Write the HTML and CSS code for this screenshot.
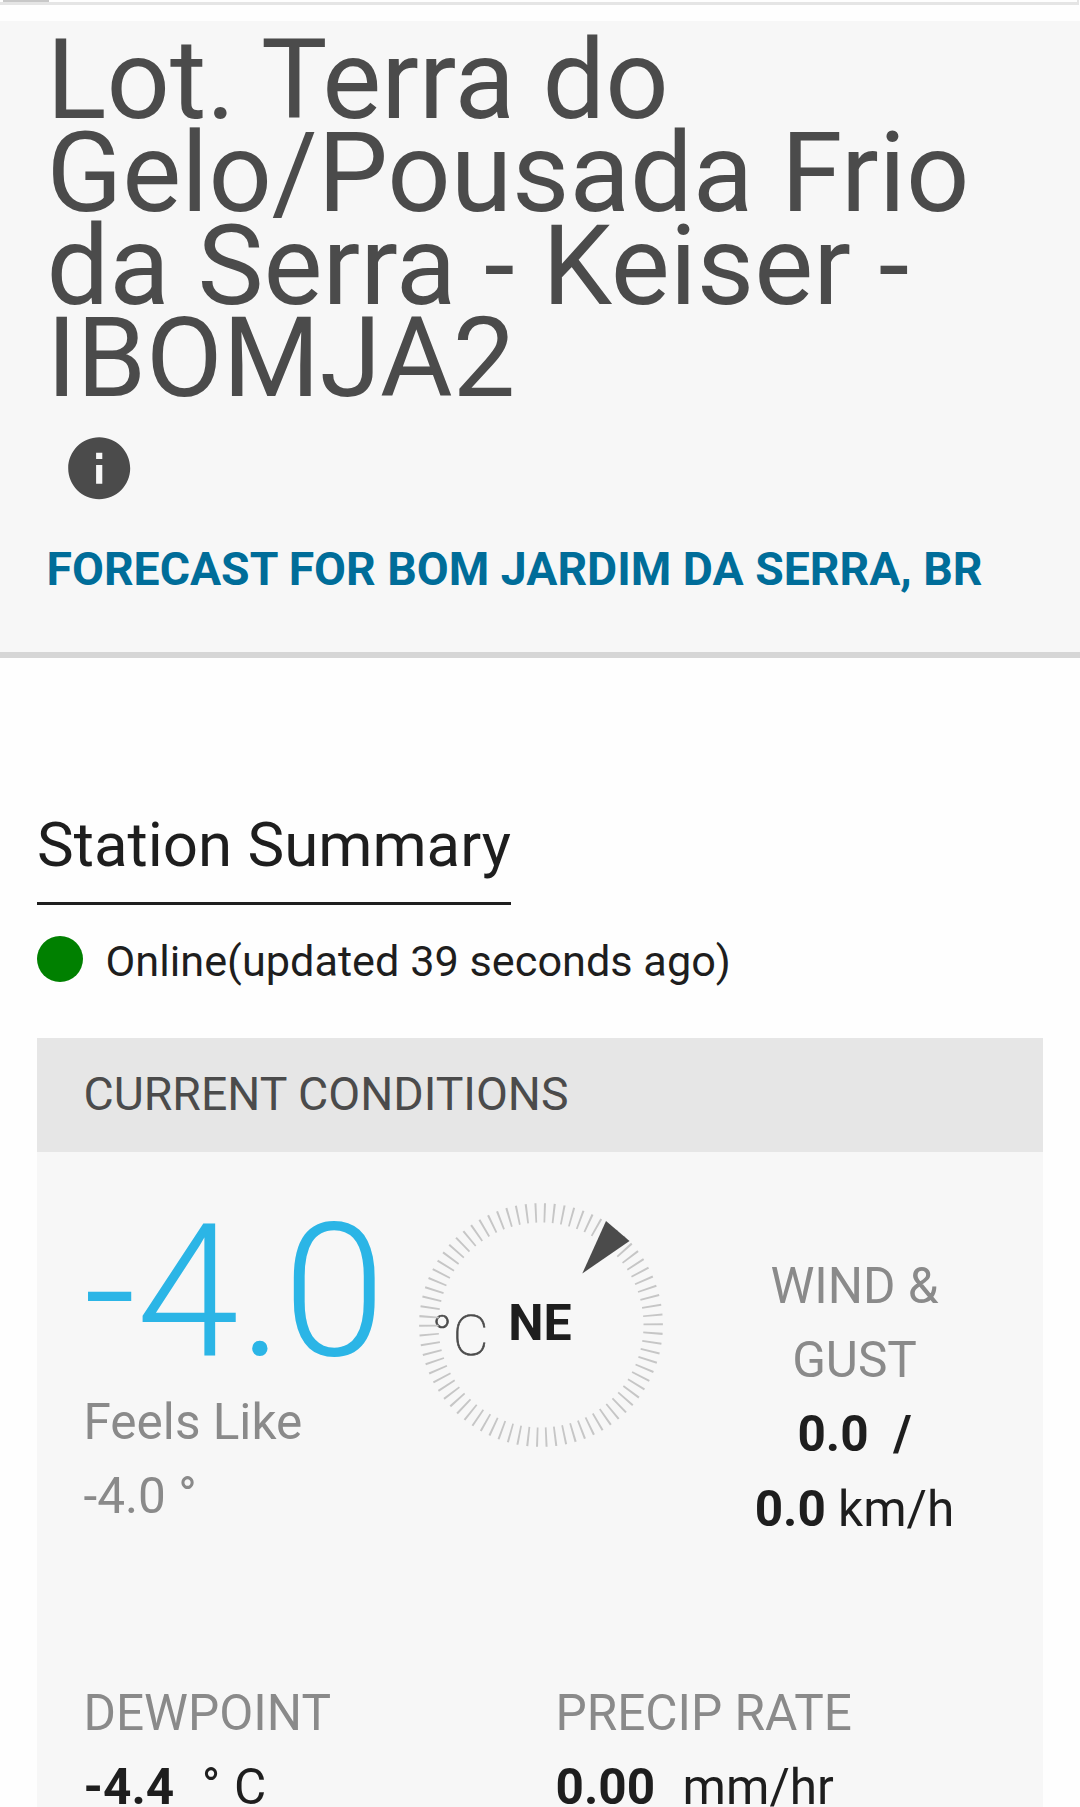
FILE: index.html
```html
<!DOCTYPE html>
<html lang="en">
<head>
    <meta charset="UTF-8">
    <meta name="viewport" content="width=device-width, initial-scale=1.0">
    <title>IBOMJA2 - Station Dashboard</title>
    <link rel="stylesheet" href="styles.css">
</head>
<body>
    <div class="scroll-strip"><div class="scroll-thumb"></div></div>

    <header class="station-header">
        <h1>Lot. Terra do<br>Gelo/Pousada Frio<br>da Serra - Keiser -<br>IBOMJA2</h1>
        <svg class="info-icon" viewBox="0 0 24 24">
            <path d="M12 2C6.48 2 2 6.48 2 12s4.48 10 10 10 10-4.48 10-10S17.52 2 12 2zm1 15h-2v-6h2v6zm0-8h-2V7h2v2z"/>
        </svg>
        <a class="forecast-link">FORECAST FOR BOM JARDIM DA SERRA, BR</a>
    </header>

    <main>
        <h2>Station Summary</h2>
        <div class="status">
            <span class="dot"></span>
            <span class="status-text">Online(updated 39 seconds ago)</span>
        </div>

        <section class="card">
            <div class="card-title">CURRENT CONDITIONS</div>
            <div class="card-body">
                <div class="top-row">
                    <div class="temp-col">
                        <div class="temp">-4.0<span class="unit">°C</span></div>
                        <div class="label">Feels Like</div>
                        <div class="label">-4.0 °</div>
                    </div>
                    <div class="compass-col">
                        <svg class="compass" viewBox="0 0 244 244">
                            <circle class="ticks" cx="122" cy="122" r="112.2" pathLength="78" transform="rotate(-0.85 122 122)"/>
                            <path class="arrow" d="M187 18L210.5 38L163.3 70.5Z"/>
                            <text class="direction" x="121" y="137">NE</text>
                        </svg>
                    </div>
                    <div class="wind-col">
                        <div class="label">WIND &amp;<br>GUST</div>
                        <div><strong>0.0 &nbsp;/</strong></div>
                        <div><strong>0.0</strong> km/h</div>
                    </div>
                </div>
                <div class="data-row">
                    <div>
                        <div class="label">DEWPOINT</div>
                        <div class="value"><strong>-4.4</strong> &nbsp;° C</div>
                    </div>
                    <div>
                        <div class="label">PRECIP RATE</div>
                        <div class="value"><strong>0.00</strong> &nbsp;mm/hr</div>
                    </div>
                </div>
            </div>
        </section>
    </main>
</body>
</html>
```
FILE: styles.css
```css
* {
    box-sizing: border-box;
}
body {
    margin: 0;
    height: 1807px;
    overflow: hidden;
    background: #fefefe;
    color: #1e1e1e;
    font-family: Roboto, sans-serif;
}
h1, h2 {
    margin: 0;
    font-weight: 400;
}
.scroll-strip {
    height: 5px;
    margin-right: 1px;
    margin-bottom: 16px;
    border-right: 2px solid #e5e5e5;
    border-bottom: 3px solid #e5e5e5;
}
.scroll-thumb {
    width: 46px;
    height: 2px;
    margin-left: 3px;
    background: #c8c8c8;
}
.station-header {
    height: 637px;
    padding: 13px 46px 0 46.5px;
    background: #f7f7f7;
    border-bottom: 6px solid #d6d6d6;
}
h1 {
    color: #4b4b4b;
    font-size: 111.3px;
    line-height: 92.8px;
    white-space: nowrap;
}
.info-icon {
    display: block;
    width: 74.4px;
    height: 74.4px;
    margin: 25.4px 0 34px 15.3px;
    fill: #4b4b4b;
}
.forecast-link {
    display: block;
    color: #006d99;
    font-size: 46.35px;
    font-weight: 700;
    line-height: 61px;
    white-space: nowrap;
}
main {
    padding: 152px 37px 0;
}
h2 {
    width: fit-content;
    padding-bottom: 22px;
    border-bottom: 3px solid #1e1e1e;
    font-size: 61.8px;
    line-height: 70px;
    white-space: nowrap;
}
.status {
    display: flex;
    gap: 22.6px;
    margin-top: 31px;
}
.dot {
    width: 46px;
    height: 46px;
    border-radius: 50%;
    background: #008000;
}
.status-text {
    padding-top: 3px;
    font-size: 43.25px;
    line-height: 46px;
}
.card {
    margin-top: 53px;
    background: #f7f7f7;
}
.card-title {
    height: 114px;
    padding-left: 46.5px;
    background: #e6e6e6;
    color: #4b4b4b;
    font-size: 46.4px;
    line-height: 112px;
}
.card-body {
    padding: 46px 0 0 46.5px;
    font-size: 49.5px;
    line-height: 74.2px;
    white-space: nowrap;
}
.label {
    color: #8a8a8a;
}
.top-row {
    display: grid;
    grid-template-columns: 326.5px 262px 365px;
    margin-bottom: 130.4px;
}
.temp {
    padding-top: 1px;
    color: #2bb5e6;
    font-size: 184.7px;
    font-weight: 300;
    line-height: 186px;
}
.unit {
    margin-left: 46px;
    color: #4b4b4b;
    font-size: 55.5px;
    font-weight: 100;
    line-height: 1;
    -webkit-text-stroke: 0.7px #4b4b4b;
}
.compass-col {
    padding-top: 4.5px;
    text-align: center;
}
.compass {
    width: 244px;
    height: 244px;
}
.ticks {
    fill: none;
    stroke: #c6c6c6;
    stroke-width: 19.4;
    stroke-dasharray: 0.21 0.79;
}
.arrow {
    fill: #4b4b4b;
}
.direction {
    fill: #1e1e1e;
    font-size: 50px;
    font-weight: 700;
    text-anchor: middle;
}
.wind-col {
    padding-top: 51px;
    text-align: center;
}
.data-row {
    display: grid;
    grid-template-columns: 472px 1fr;
}
.value {
    word-spacing: 1.5px;
}
```
